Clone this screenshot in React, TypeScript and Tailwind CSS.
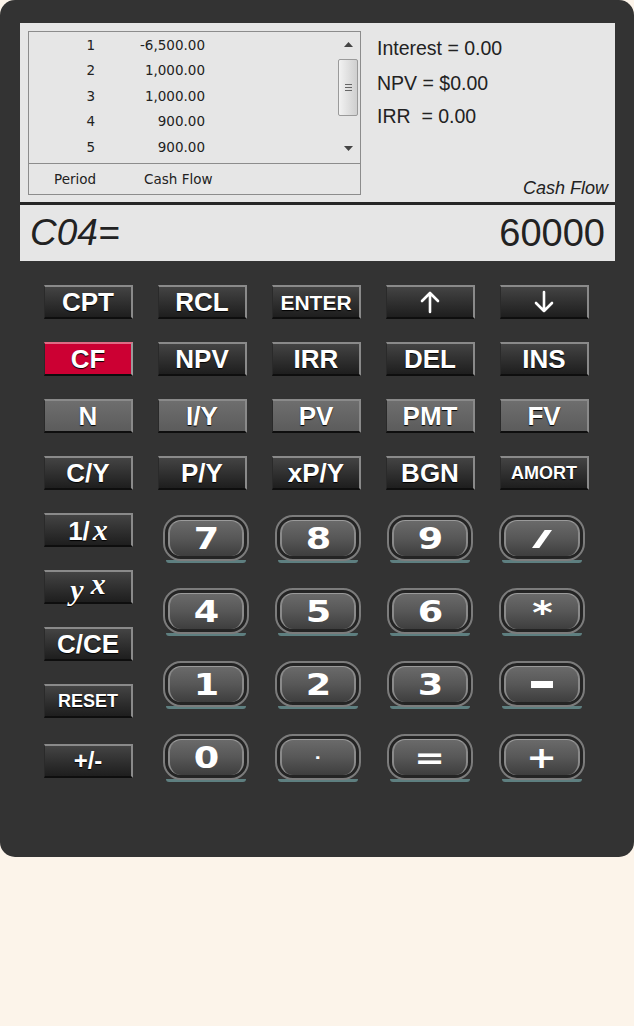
import React from "react";

const fnBase =
  "flex h-[34px] w-[89px] items-center justify-center border-t-2 border-r-2 border-b-2 border-l border-t-[#8a8a8a] border-r-[#8a8a8a] border-b-[#0e0e0e] border-l-[#2a2a2a] font-bold leading-none text-white [font-family:'Liberation_Sans',Arial,sans-serif] [text-shadow:0_1px_1px_#000]";

function FnKey({ label, variant = "dark", size = "text-[26px]" }: { label: React.ReactNode; variant?: "dark" | "red" | "gray"; size?: string }) {
  const bg =
    variant === "red"
      ? "bg-[#cc0033] border-t-[#e06a84] border-r-[#9a9a9a]"
      : variant === "gray"
      ? "bg-gradient-to-b from-[#6e6e6e] to-[#5c5c5c]"
      : "bg-gradient-to-b from-[#444444] to-[#1e1e1e]";
  return <div className={`${fnBase} ${bg} ${size}`}>{label}</div>;
}

function Arrow({ down = false }: { down?: boolean }) {
  return (
    <svg width="22" height="24" viewBox="0 0 22 24" className={down ? "rotate-180" : ""}>
      <path d="M11 22 V3 M3 11 L11 3 L19 11" fill="none" stroke="#fff" strokeWidth="2.6" strokeLinecap="round" strokeLinejoin="round" />
    </svg>
  );
}

function NumKey({ label }: { label: React.ReactNode }) {
  return (
    <div className="relative h-[48px] w-[86px]">
      <div className="absolute inset-x-[3px] bottom-0 h-[3px] rounded-b-[10px] bg-[#5e7f80]" />
      <div className="absolute inset-x-0 top-0 bottom-[2px] rounded-[18px] border-2 border-[#7c7c7c] bg-[#242424] p-[3px]">
        <div className="flex h-full w-full items-center justify-center rounded-[13px] border-x-2 border-t border-x-[#8a8a8a] border-t-[#9a9a9a] bg-gradient-to-b from-[#6a6a6a] via-[#575757] to-[#3e3e3e] text-[30px] font-bold leading-none text-white [font-family:'DejaVu_Sans',sans-serif]">
          <span className="flex scale-x-[1.22] items-center justify-center">{label}</span>
        </div>
      </div>
    </div>
  );
}

const rows = [
  ["1", "-6,500.00"],
  ["2", "1,000.00"],
  ["3", "1,000.00"],
  ["4", "900.00"],
  ["5", "900.00"],
];

export default function App() {
  return (
    <div className="min-h-[1026px] w-[634px] bg-[#fcf4ea] [font-family:'Liberation_Sans',Arial,sans-serif]">
      <div className="flex h-[857px] w-[634px] flex-col rounded-[15px] bg-[#333333] pt-[23px]">
        {/* display */}
        <div className="mx-[20px] flex h-[179px] w-[595px] bg-[#e6e6e6]">
          <div className="ml-[8px] mt-[8px] flex h-[164px] w-[333px] flex-col border border-[#8c8c8c]">
            <div className="flex h-[132px] border-b border-[#8c8c8c]">
              <div className="flex flex-1 flex-col text-[13.5px] text-[#222] [font-family:'DejaVu_Sans',sans-serif]">
                {rows.map(([p, v]) => (
                  <div key={p} className="flex h-[25.6px] items-center">
                    <span className="w-[66px] text-right">{p}</span>
                    <span className="w-[110px] text-right">{v}</span>
                  </div>
                ))}
              </div>
              <div className="flex w-[24px] flex-col items-center pt-[10px]">
                <svg width="9" height="6" viewBox="0 0 9 6"><path d="M0 5 L4.5 0 L9 5 Z" fill="#444" /></svg>
                <div className="mt-[11px] flex h-[57px] w-[20px] items-center justify-center rounded-[2px] border border-[#9a9a9a] bg-gradient-to-r from-[#f2f2f2] to-[#cfcfcf]">
                  <div className="flex flex-col gap-[2px]">
                    <div className="h-px w-[7px] bg-[#666]" />
                    <div className="h-px w-[7px] bg-[#666]" />
                    <div className="h-px w-[7px] bg-[#666]" />
                  </div>
                </div>
                <svg className="mt-[29px]" width="9" height="6" viewBox="0 0 9 6"><path d="M0 1 L9 1 L4.5 6 Z" fill="#444" /></svg>
              </div>
            </div>
            <div className="flex flex-1 items-center text-[13.5px] text-[#222] [font-family:'DejaVu_Sans',sans-serif]">
              <span className="ml-[25px]">Period</span>
              <span className="ml-[48px]">Cash Flow</span>
            </div>
          </div>
          <div className="flex flex-1 flex-col pl-[16px] text-[19.5px] leading-[24px] text-[#222]">
            <div className="mt-[13px]">Interest = 0.00</div>
            <div className="mt-[11px]">NPV = $0.00</div>
            <div className="mt-[9px] whitespace-pre">IRR  = 0.00</div>
            <div className="mt-auto mb-[2px] mr-[7px] text-right text-[18px] italic">Cash Flow</div>
          </div>
        </div>
        <div className="mx-[20px] h-[3px] w-[595px] bg-[#262626]" />
        <div className="mx-[20px] flex h-[56px] w-[595px] items-center justify-between bg-[#e6e6e6] pl-[10px] pr-[10px] text-[#222]">
          <span className="text-[37px] italic">C04=</span>
          <span className="text-[38px]">60000</span>
        </div>

        {/* function keys */}
        <div className="ml-[44px] mt-[24px] grid grid-cols-[repeat(5,89px)] gap-x-[25px] gap-y-[23px]">
          <FnKey label="CPT" />
          <FnKey label="RCL" />
          <FnKey label="ENTER" size="text-[21px]" />
          <FnKey label={<Arrow />} />
          <FnKey label={<Arrow down />} />
          <FnKey label="CF" variant="red" />
          <FnKey label="NPV" />
          <FnKey label="IRR" />
          <FnKey label="DEL" />
          <FnKey label="INS" />
          <FnKey label="N" variant="gray" />
          <FnKey label="I/Y" variant="gray" />
          <FnKey label="PV" variant="gray" />
          <FnKey label="PMT" variant="gray" />
          <FnKey label="FV" variant="gray" />
          <FnKey label="C/Y" />
          <FnKey label="P/Y" />
          <FnKey label="xP/Y" />
          <FnKey label="BGN" />
          <FnKey label="AMORT" size="text-[18px]" />
        </div>

        <div className="ml-[44px] mt-[23px] flex">
          <div className="flex flex-col">
            <FnKey
              label={
                <span className="flex items-baseline">
                  1/<span className="ml-[3px] text-[30px] italic [font-family:'Liberation_Serif',serif]">x</span>
                </span>
              }
            />
            <div className="mt-[23px]">
              <FnKey
                label={
                  <span className="flex items-baseline text-[30px] italic [font-family:'Liberation_Serif',serif]">
                    <span className="relative top-[3px]">y</span>
                    <span className="relative -top-[3px] ml-[7px]">x</span>
                  </span>
                }
              />
            </div>
            <div className="mt-[23px]">
              <FnKey label="C/CE" />
            </div>
            <div className="mt-[23px]">
              <FnKey label="RESET" size="text-[18px]" />
            </div>
            <div className="mt-[26px]">
              <FnKey label="+/-" size="text-[24px]" />
            </div>
          </div>
          <div className="ml-[30px] mt-[2px] grid grid-cols-[repeat(4,86px)] gap-x-[26px] gap-y-[25px] self-start">
            <NumKey label="7" />
            <NumKey label="8" />
            <NumKey label="9" />
            <NumKey label={<span className="block h-[18px] w-[6px] skew-x-[-30deg] bg-white" />} />
            <NumKey label="4" />
            <NumKey label="5" />
            <NumKey label="6" />
            <NumKey label={<span className="text-[32px]">*</span>} />
            <NumKey label="1" />
            <NumKey label="2" />
            <NumKey label="3" />
            <NumKey label={<span className="block h-[7px] w-[18px] bg-white" />} />
            <NumKey label="0" />
            <NumKey label={<span className="text-[14px]">·</span>} />
            <NumKey label="=" />
            <NumKey label="+" />
          </div>
        </div>
      </div>
    </div>
  );
}
